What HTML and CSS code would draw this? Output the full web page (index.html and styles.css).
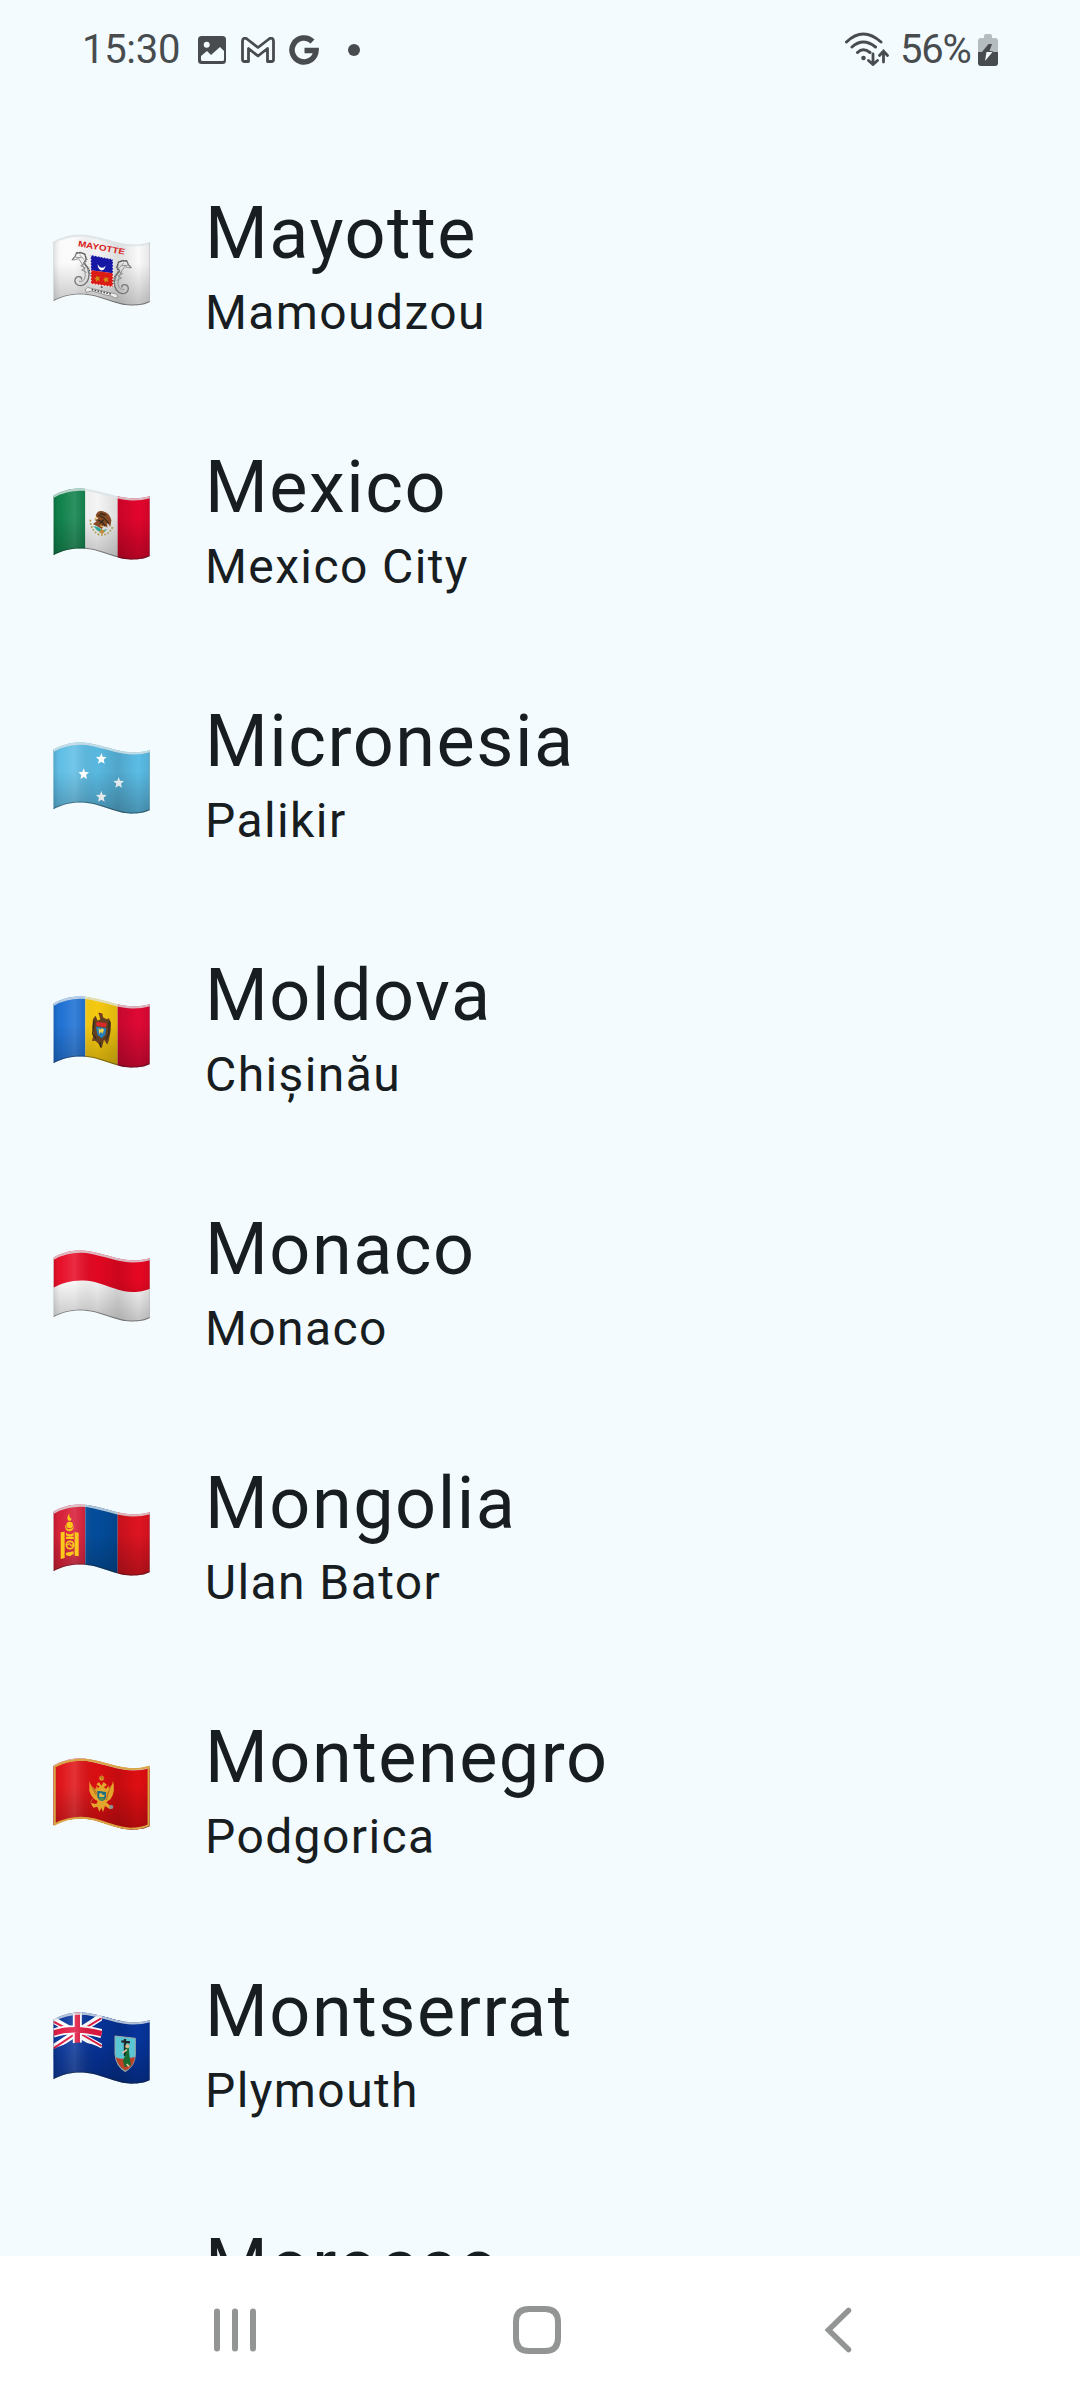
FILE: index.html
```html
<!DOCTYPE html>
<html lang="en">
<head>
<meta charset="utf-8">
<title>Countries</title>
<link rel="stylesheet" href="styles.css">
</head>
<body>
<svg class="defs" aria-hidden="true">
  <defs>
    <path id="wave" d="M41 79C75 60 110 52 160 62C210 72 240 87 280 87C300 87 318 84 331 80V260C318 267 300 271 275 271C240 271 205 254 165 243C115 231 75 240 41 258Z"/>
    <clipPath id="cloth"><use href="#wave"/></clipPath>
    <linearGradient id="folds">
      <stop offset="0" stop-color="#000" stop-opacity=".12"/>
      <stop offset=".08" stop-color="#fff" stop-opacity=".04"/>
      <stop offset=".22" stop-color="#fff" stop-opacity=".15"/>
      <stop offset=".45" stop-color="#000" stop-opacity=".02"/>
      <stop offset=".67" stop-color="#000" stop-opacity=".12"/>
      <stop offset=".88" stop-color="#000" stop-opacity="0"/>
      <stop offset="1" stop-color="#000" stop-opacity=".08"/>
    </linearGradient>
    <linearGradient id="drop" x2="0" y2="1">
      <stop offset=".4" stop-color="#000" stop-opacity="0"/>
      <stop offset="1" stop-color="#000" stop-opacity=".22"/>
    </linearGradient>
    <g id="shade" clip-path="url(#cloth)">
      <use href="#wave" fill="url(#folds)"/>
      <use href="#wave" fill="url(#drop)"/>
      <path d="M41 258C75 240 115 231 165 243C205 254 240 271 275 271C300 271 318 267 331 260" fill="none" stroke="#222" stroke-opacity=".45" stroke-width="7"/>
      <path d="M41 81C75 62 110 54 160 64C210 74 240 89 280 89C300 89 318 86 331 82" fill="none" stroke="#dce3e6" stroke-opacity=".8" stroke-width="9"/>
      <path d="M41 79V258M331 80V260" stroke="#aab4b8" stroke-opacity=".6" stroke-width="4"/>
    </g>
    <path id="star" d="M0-17L4-6L16-5L7 3L10 15L0 9L-10 15L-7 3L-16-5L-4-6Z"/>
    <g id="seahorse" fill="none" stroke="#777" stroke-linecap="round">
      <path d="M98 133L106 124L110 114L123 111L136 117L139 132L132 143L144 158L148 177C148 195 141 207 125 211C110 212 103 200 107 190C111 181 125 182 126 191" stroke-width="4"/>
      <path d="M101 134L117 130C129 146 136 162 137 178C136 196 127 200 119 198M121 120L132 132M109 126L124 127M133 146L123 151L137 158L126 164L140 171" stroke-width="3" stroke="#929292"/>
      <path d="M111 112L134 115L142 132L136 144L149 162L152 181" stroke="#555" stroke-width="3" stroke-dasharray="3 5"/>
    </g>
  </defs>
</svg>
<div class="screen">
  <header class="status">
    <div class="status-left">
      <span class="clock">15:30</span>
      <svg class="ico-image" viewBox="0 0 28 28"><rect width="28" height="28" rx="3.5" fill="#484c4e"/><circle cx="8.7" cy="8.8" r="3" fill="#f3fbff"/><path d="M3 20L9 15L13 19L22 11L26 15V23.5Q26 25 24.5 25H4.500Q3 25 3 23.500Z" fill="#f3fbff"/></svg>
      <svg class="ico-mail" viewBox="0 0 34 26"><path d="M1.500 22.500V4C1.500 1 4 .5 6 2L17 10.500L28 2C30 .5 32.500 1 32.500 4V22.500Q32.500 24.500 30.500 24.500H26.500V11.500L17 19L7.500 11.500V24.500H3.500Q1.500 24.500 1.500 22.500Z" fill="none" stroke="#484c4e" stroke-width="2.800" stroke-linejoin="round"/></svg>
      <svg class="ico-g" viewBox="0 0 30 30"><path d="M23.500 6.500A12 12 0 1 0 27 15.500H15.500" fill="none" stroke="#484c4e" stroke-width="5.600"/></svg>
      <i class="dot"></i>
    </div>
    <div class="status-right">
      <svg class="ico-wifi" viewBox="0 0 44 34"><g fill="none" stroke="#484c4e" stroke-width="3" stroke-linecap="round"><path d="M1.500 10Q18-6 36 10M7 15Q18 5 30.500 15M12.500 20.500Q18 15 25 20.500"/><path stroke-width="2.800" d="M28 22V32M23.500 28.500L28 32.500L32.500 28.500M38.500 30V19M34.500 23.500L38.500 19L42.500 23.500"/></g><circle cx="18.500" cy="26" r="2.300" fill="#484c4e"/></svg>
      <span class="percent">56%</span>
      <svg class="ico-battery" viewBox="0 0 20 32"><path d="M6 2Q6 0 8 0H12Q14 0 14 2V4H17Q20 4 20 7V18H0V7Q0 4 3 4H6Z" fill="#b4bcc0"/><path d="M0 18H20V29Q20 32 17 32H3Q0 32 0 29Z" fill="#484c4e"/><path d="M10.500 10H14L11.500 17H15L14.500 18H4Z" fill="#484c4e"/><path d="M8.500 18H14.500L7 27Z" fill="#f3fbff"/></svg>
    </div>
  </header>
  <main class="list">
    <article class="row">
      <svg class="flag" viewBox="40 53 294 222"><use href="#wave" fill="#fafafa"/><use href="#shade"/>
        <g class="flag-name" transform="translate(114 93) rotate(10)"><text textLength="143" lengthAdjust="spacingAndGlyphs">MAYOTTE</text></g>
        <use href="#seahorse"/><use href="#seahorse" transform="translate(372 24) scale(-1 1)"/>
        <path d="M153 119L220 132V174L154 165Z" fill="#1717a5"/><path d="M154 165L220 174V215L154 205Z" fill="#db1b16"/><path d="M153 119L220 132V215L154 205Z" fill="none" stroke="#eee" stroke-width="4" stroke-dasharray="4 5"/>
        <path d="M174 147Q184 166 198 151Q193 169 181 163Q174 159 174 147Z" fill="#fff"/><path d="M170 181L174 185L181 184L178 190L181 196L174 195L170 199L168 192L164 189L169 187ZM196 184L200 188L207 187L204 193L207 199L200 198L196 202L194 195L190 192L195 190Z" fill="#d18c15"/>
        <path d="M137 222Q143 212 154 219L216 233Q229 233 236 244L226 248Q214 239 202 240L157 227L139 231Z" fill="#eee" stroke="#777" stroke-width="2"/><path d="M156 223L216 236M186 213V222" stroke="#555" stroke-width="5" stroke-dasharray="5 4"/>
      </svg>
      <div class="text"><h2>Mayotte</h2><p>Mamoudzou</p></div>
    </article>
    <article class="row">
      <svg class="flag" viewBox="40 53 294 222"><g clip-path="url(#cloth)"><path d="M40 50H137V280H40Z" fill="#087d45"/><path d="M137 50H234V280H137Z" fill="#fafafa"/><path d="M234 50H334V280H234Z" fill="#e3052d"/></g><use href="#shade"/>
        <path d="M152 151Q152 181 176 195Q205 204 220 171" fill="none" stroke="#a79a4b" stroke-width="5" stroke-dasharray="5 5"/>
        <path d="M168 139Q173 121 190 126Q210 131 215 153L212 172L203 160L203 175L193 167L187 179L160 164L171 156L164 151L176 149Z" fill="#854a25"/><path d="M176 137L192 145L208 163M175 152L188 158L197 171M181 132L198 137M181 162L192 151" stroke="#352819" stroke-width="4" fill="none"/><path d="M160 169L176 174L190 183L203 178L192 190L174 185Z" fill="#2ea99b"/><path d="M185 180L196 185L188 195L178 188Z" fill="#c68c39"/><path d="M165 148L173 144M182 169L190 173" stroke="#e7b95b" stroke-width="4"/>
      </svg>
      <div class="text"><h2>Mexico</h2><p>Mexico City</p></div>
    </article>
    <article class="row">
      <svg class="flag" viewBox="40 53 294 222"><use href="#wave" fill="#5bbce5"/><use href="#shade"/>
        <use href="#star" x="185" y="106" fill="#fff"/><use href="#star" x="132" y="152" fill="#fff"/><use href="#star" x="237" y="178" fill="#e3e8ea"/><use href="#star" x="185" y="220" fill="#e5e9eb"/>
      </svg>
      <div class="text"><h2>Micronesia</h2><p>Palikir</p></div>
    </article>
    <article class="row">
      <svg class="flag" viewBox="40 53 294 222"><g clip-path="url(#cloth)"><path d="M40 50H137V280H40Z" fill="#176cd2"/><path d="M137 50H234V280H137Z" fill="#fbce10"/><path d="M234 50H334V280H234Z" fill="#df0935"/></g><use href="#shade"/>
        <path d="M177 108L187 109L190 120L201 126L208 123L214 136L213 160L208 187L203 202L193 187L186 213L174 196L166 190L157 191L162 171L158 148L160 125L168 115L174 130L182 126Z" fill="#663f20"/><path d="M163 130L159 170L169 184M209 132L207 169L199 186M181 194L183 210" stroke="#31291b" stroke-width="4" fill="none"/><path d="M170 133L202 138L198 150L170 146Z" fill="#db2928"/><path d="M169 148L200 152L197 172L186 183L173 172Z" fill="#277eb5"/><path d="M176 152L182 157L187 152L193 158L188 169L184 163L179 171Z" fill="#efd251"/><path d="M177 108L189 112" stroke="#863326" stroke-width="5"/>
      </svg>
      <div class="text"><h2>Moldova</h2><p>Chișinău</p></div>
    </article>
    <article class="row">
      <svg class="flag" viewBox="40 53 294 222"><use href="#wave" fill="#fafafa"/><g clip-path="url(#cloth)"><path d="M41 50H334V171C318 177 305 182 280 182C240 182 205 163 165 152C115 141 75 151 41 169Z" fill="#e70722"/></g><use href="#shade"/></svg>
      <div class="text"><h2>Monaco</h2><p>Monaco</p></div>
    </article>
    <article class="row">
      <svg class="flag" viewBox="40 53 294 222"><g clip-path="url(#cloth)"><path d="M40 50H137V280H40Z" fill="#d61732"/><path d="M137 50H234V280H137Z" fill="#034e9e"/><path d="M234 50H334V280H234Z" fill="#df1421"/></g><use href="#shade"/>
        <g fill="#fbc91b"><path d="M89 84Q87 96 96 101Q91 111 84 103Q81 96 89 84Z"/><circle cx="90" cy="119" r="10"/><path d="M78 119Q80 138 99 128L102 119Q103 137 90 138Q77 138 76 122ZM63 141L75 139V218L63 221ZM105 140L117 142V213L105 211ZM79 142Q91 151 102 142V150Q91 157 79 150ZM79 154H102V161H79ZM79 202L102 198V205L91 213L79 210Z"/></g><circle cx="91" cy="179" r="11" fill="none" stroke="#fbc91b" stroke-width="5"/><path d="M82 180Q90 172 93 179Q98 185 101 176" fill="none" stroke="#fbc91b" stroke-width="4"/>
      </svg>
      <div class="text"><h2>Mongolia</h2><p>Ulan Bator</p></div>
    </article>
    <article class="row">
      <svg class="flag" viewBox="40 53 294 222"><use href="#wave" fill="#de0e12"/><use href="#shade"/><use href="#wave" fill="none" stroke="#d8a642" stroke-width="6" transform="translate(5.580 4.950) scale(.97)"/>
        <g fill="#e4a52d"><path d="M149 123Q151 142 170 150L169 139L175 146L180 142L170 135L178 128L185 139L192 128L202 137L193 143L199 149L207 138L207 147Q219 138 220 124Q228 157 213 179L200 189L216 203L211 210L196 200L190 218L185 205L179 217L173 202L161 205L153 191L170 194L174 185Q158 180 149 155Z"/><circle cx="186" cy="117" r="7"/></g><path d="M186 106V121M178 112L194 118M156 140L168 166M162 146L178 174M213 142L201 172M207 155L200 182M158 178L153 190" stroke="#b96d20" stroke-width="3"/><path d="M173 154L199 158V172Q198 183 186 185Q174 181 173 170Z" fill="#176e82"/><path d="M178 164L184 160L190 168L194 164V173L179 174Z" fill="#dfb849"/><path d="M175 176L197 177L187 184Z" fill="#579442"/><circle cx="215" cy="203" r="6" fill="#879599"/>
      </svg>
      <div class="text"><h2>Montenegro</h2><p>Podgorica</p></div>
    </article>
    <article class="row">
      <svg class="flag" viewBox="40 53 294 222"><use href="#wave" fill="#06349b"/><g clip-path="url(#cloth)"><path d="M40 80L186 162M40 164L186 70" stroke="#fff" stroke-width="20"/><path d="M40 84L106 119M186 158L124 122M40 166L104 123M186 74L124 112" stroke="#e01740" stroke-width="6"/><path d="M113 50V162M40 120Q100 98 186 121" fill="none" stroke="#fff" stroke-width="27"/><path d="M113 50V162M40 120Q100 98 186 121" fill="none" stroke="#e01740" stroke-width="16"/><path d="M187 50V166Q150 144 110 148Q70 150 41 168V200H250V50Z" fill="#06349b"/></g><use href="#shade"/>
        <path d="M226 128L287 135V186Q286 217 257 235Q229 220 226 182Z" fill="#5ac6d4" stroke="#9ba9a7" stroke-width="3"/><path d="M228 190Q240 202 286 191Q283 220 257 232Q233 218 228 190Z" fill="#bd4027"/><path d="M256 137V188M245 144L271 147" stroke="#20272a" stroke-width="7"/><path d="M257 153L267 160L269 184L274 216L255 221L250 202L258 182Z" fill="#176c32"/><circle cx="263" cy="159" r="6" fill="#e1b790"/><path d="M262 169L248 179M261 212L268 219" stroke="#e3c4a5" stroke-width="5"/>
      </svg>
      <div class="text"><h2>Montserrat</h2><p>Plymouth</p></div>
    </article>
    <article class="row">
      <div class="flag"></div>
      <div class="text"><h2>Morocco</h2></div>
    </article>
  </main>
  <nav class="nav">
    <svg viewBox="0 0 48 48"><path d="M6 5.500V42.500M24 5.500V42.500M42 5.500V42.500" fill="none" stroke="#929594" stroke-width="6" stroke-linecap="round"/></svg>
    <svg viewBox="0 0 48 48"><path d="M16 3H32Q45 3 45 16V32Q45 45 32 45H16Q3 45 3 32V16Q3 3 16 3Z" fill="none" stroke="#929594" stroke-width="6"/></svg>
    <svg viewBox="0 0 48 48"><path d="M34.500 4.500L14.500 24L34.500 43.500" fill="none" stroke="#929594" stroke-width="5.500" stroke-linecap="round"/></svg>
  </nav>
</div>
</body>
</html>
```
FILE: styles.css
```css
* { box-sizing: border-box; }
body { margin: 0; font-family: Roboto, "Noto Sans", sans-serif; background: #f3fbff; color: #171d20; }
svg { display: block; flex: none; }
.defs { width: 0; height: 0; }
.screen { width: 1080px; height: 2400px; display: flex; flex-direction: column; overflow: hidden; }
.status { flex: none; height: 99px; padding: 0 82px 0 82px; display: flex; justify-content: space-between; align-items: center; color: #484c4e; font-size: 40px; }
.status-left, .status-right { display: flex; align-items: center; height: 99px; }
.clock { width: 116px; letter-spacing: -0.3px; }
.ico-image { width: 28px; height: 28px; margin-top: 1px; }
.ico-mail { width: 34px; height: 26px; margin: 0 0 0 15px; }
.ico-g { width: 30px; height: 30px; margin: 1px 0 0 14px; }
.dot { width: 12px; height: 12px; margin: 1px 0 0 29px; border-radius: 50%; background: #484c4e; }
.ico-wifi { width: 44px; height: 34px; margin: 0 11px 2px 0; }
.percent { width: 78px; letter-spacing: -1.2px; }
.ico-battery { width: 20px; height: 32px; }
.list { flex: 1; min-height: 0; overflow: hidden; padding-top: 44px; }
.row { height: 254px; display: flex; padding-left: 53px; }
.flag { flex: none; width: 98px; height: 74px; margin-top: 90px; }
.flag-name { font: bold 25px "Liberation Sans", sans-serif; fill: #d91d1b; }
.text { padding: 49px 0 0 54px; }
h2, p { margin: 0; font-weight: 400; white-space: nowrap; }
h2 { font-size: 72px; line-height: 84px; letter-spacing: 1.5px; }
p { font-size: 48px; line-height: 64px; margin-top: 5px; letter-spacing: 1.4px; }
.nav { flex: none; height: 144px; padding: 4px 218px 0 211px; display: flex; align-items: center; justify-content: space-between; background: #fff; }
.nav svg { width: 48px; height: 48px; }
```
